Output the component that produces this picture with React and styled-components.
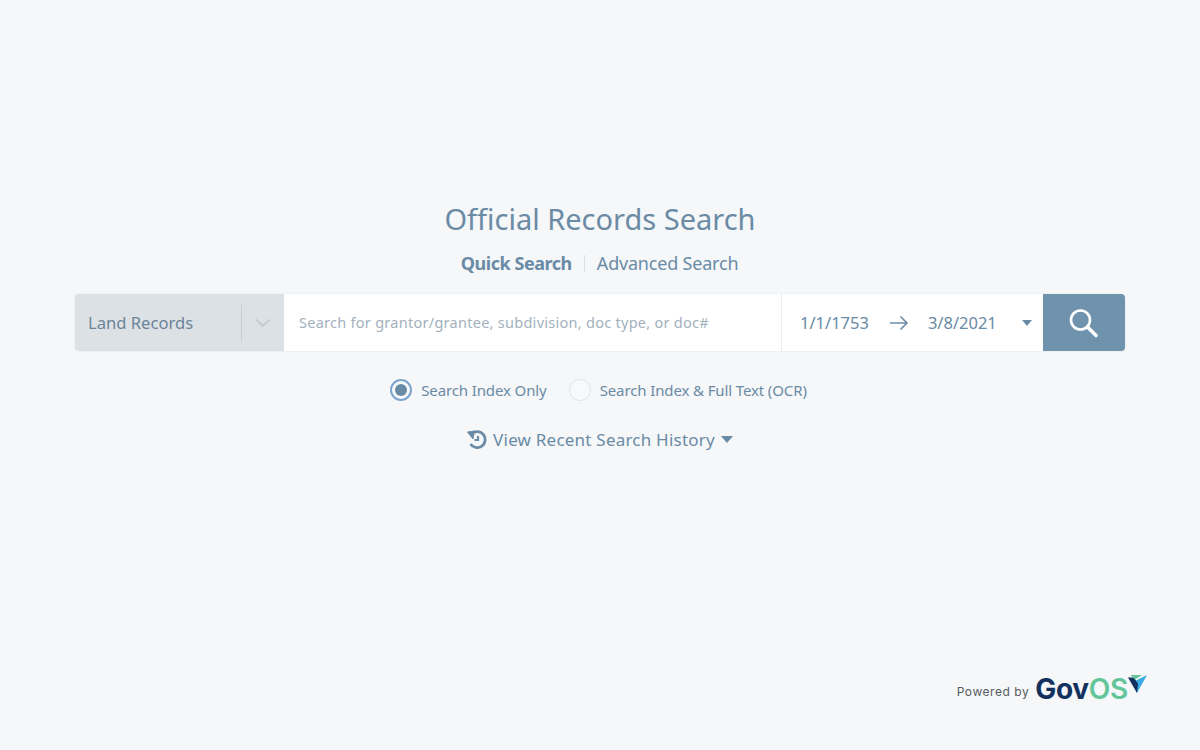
import React from 'react'
import styled, { createGlobalStyle } from 'styled-components'

const Global = createGlobalStyle`
    html, body {
        margin: 0;
        padding: 0;
        background: #f5f7f9;
    }
    * { box-sizing: border-box; }
`

const Page = styled.div`
    height: 750px;
    overflow: hidden;
    display: flex;
    flex-direction: column;
    align-items: center;
    padding-top: 199px;
    font-family: "Noto Sans", "Open Sans", sans-serif;
    color: #6a8ba6;
`

const Title = styled.h1`
    margin: 0;
    font-weight: 400;
    font-size: 29px;
    line-height: 40px;
    color: #6b8ba5;
`

const Tabs = styled.div`
    display: flex;
    align-items: center;
    margin-top: 11px;
    margin-right: 1px;
    height: 26px;
    font-size: 18px;
`

const Tab = styled.span`
    font-weight: ${(p) => (p.$active ? 700 : 400)};
    letter-spacing: ${(p) => (p.$active ? '-0.45px' : '-0.2px')};
`

const Divider = styled.span`
    width: 1px;
    height: 17px;
    margin: 0 12px;
    background: #dce1e6;
`

const Bar = styled.div`
    width: 1050px;
    height: 57px;
    margin-top: 18px;
    display: flex;
    border-radius: 4px;
    overflow: hidden;
    box-shadow: 0 0 2px rgba(120, 135, 150, 0.18);
`

const Select = styled.div`
    width: 209px;
    display: flex;
    align-items: center;
    background: #dce1e6;
    padding-left: 13px;
    font-size: 16.6px;
    color: #6d8498;
`

const SelectLabel = styled.span`
    width: 153px;
`

const SelectRule = styled.span`
    width: 1px;
    height: 36px;
    background: #c5cdd4;
`

const Chevron = styled.svg`
    margin-left: 13px;
    width: 16px;
    height: 10px;
    fill: none;
    stroke: #c4ccd3;
    stroke-width: 2;
`

const Input = styled.input`
    width: 497px;
    border: 0;
    outline: 0;
    padding: 0 15px 2px;
    background: #fff;
    font-family: inherit;
    font-size: 14.5px;
    letter-spacing: 0.27px;

    &::placeholder {
        color: #a3b1bd;
        opacity: 1;
    }
`

const Dates = styled.div`
    width: 262px;
    display: flex;
    align-items: center;
    background: #fff;
    border-left: 1px solid #e8ebef;
    padding-left: 18px;
    font-size: 16.5px;
    color: #6a8ba6;
`

const Arrow = styled.svg`
    width: 20px;
    height: 16px;
    margin: 0 19px 0 20px;
    fill: none;
    stroke: #6f8ca5;
    stroke-width: 1.6;
`

const Caret = styled.span`
    width: 0;
    height: 0;
    border-left: ${(p) => p.$size}px solid transparent;
    border-right: ${(p) => p.$size}px solid transparent;
    border-top: ${(p) => p.$size + 1}px solid #6a8ba6;
`

const DateCaret = styled(Caret)`
    margin-left: 25px;
`

const SearchButton = styled.button`
    width: 82px;
    border: 0;
    padding: 0 3px 0 0;
    display: flex;
    align-items: center;
    justify-content: center;
    background: #6f92ad;
`

const Options = styled.div`
    display: flex;
    align-items: center;
    margin-top: 27px;
    margin-right: 3px;
    height: 24px;
    font-size: 15px;
    letter-spacing: -0.12px;
`

const Option = styled.label`
    display: flex;
    align-items: center;
    gap: 9px;
    margin-left: ${(p) => (p.$spaced ? '22px' : 0)};
`

const Radio = styled.span`
    width: 22px;
    height: 22px;
    border-radius: 50%;
    display: flex;
    align-items: center;
    justify-content: center;
    background: #f8f9fb;
    border: ${(p) => (p.$checked ? '2px solid #7ba4cc' : '1.5px solid #e0e4e9')};

    &::after {
        content: "";
        display: ${(p) => (p.$checked ? 'block' : 'none')};
        width: 12px;
        height: 12px;
        border-radius: 50%;
        background: #6a8ba6;
    }
`

const History = styled.div`
    display: flex;
    align-items: center;
    margin-top: 25px;
    height: 24px;
    font-size: 17px;
    letter-spacing: 0.22px;
`

const HistoryIcon = styled.svg`
    width: 21px;
    height: 21px;
    margin-right: 5px;
    fill: none;
    stroke: #6a8ba6;
    stroke-width: 2.8;
`

const HistoryCaret = styled(Caret)`
    margin-left: 6px;
`

const Footer = styled.footer`
    margin-top: auto;
    align-self: flex-end;
    display: flex;
    align-items: flex-end;
    margin-right: 53px;
    margin-bottom: 48px;
`

const Powered = styled.span`
    font-size: 12px;
    color: #555b61;
    margin-right: 6px;
    margin-bottom: 3px;
    letter-spacing: 0.55px;
    font-family: "Inter", sans-serif;
`

const Logo = styled.span`
    font-family: "Inter", sans-serif;
    font-weight: 700;
    font-size: 28px;
    line-height: 26px;
    letter-spacing: -0.3px;
    color: #12315f;
`

const LogoGreen = styled.span`
    color: #62c69a;
    font-weight: 600;
`

const LogoMark = styled.svg`
    width: 20px;
    height: 18px;
    margin-left: -1px;
    margin-bottom: 9px;
`

const App = () => {
  return (
    <Page>
      <Global />
      <Title>Official Records Search</Title>
      <Tabs>
        <Tab $active>Quick Search</Tab>
        <Divider />
        <Tab>Advanced Search</Tab>
      </Tabs>
      <Bar>
        <Select>
          <SelectLabel>Land Records</SelectLabel>
          <SelectRule />
          <Chevron viewBox="0 0 16 10"><path d="M1 1.5 8 8l7-6.5" /></Chevron>
        </Select>
        <Input placeholder="Search for grantor/grantee, subdivision, doc type, or doc#" />
        <Dates>
          <span>1/1/1753</span>
          <Arrow viewBox="0 0 20 16"><path d="M1 8h17M11.5 1.5 18 8l-6.5 6.5" /></Arrow>
          <span>3/8/2021</span>
          <DateCaret $size={5} />
        </Dates>
        <SearchButton aria-label="Search">
          <svg width="32" height="32" viewBox="0 0 32 32" fill="none" stroke="#fff">
            <circle cx="13.5" cy="13" r="9.5" strokeWidth="2.6" />
            <path d="M20.5 20 29 28.5" strokeWidth="3.6" strokeLinecap="round" />
          </svg>
        </SearchButton>
      </Bar>
      <Options>
        <Option><Radio $checked />Search Index Only</Option>
        <Option $spaced><Radio />Search Index &amp; Full Text (OCR)</Option>
      </Options>
      <History>
        <HistoryIcon viewBox="0 0 21 21">
          <path d="M5 4.5A8 8 0 1 1 3.5 15" />
          <path d="M0.5 3 7.5 2 6 10Z" fill="#6a8ba6" strokeWidth="1" />
          <path d="M11 7v4H7.5" strokeWidth="2.2" />
        </HistoryIcon>
        View Recent Search History
        <HistoryCaret $size={6} />
      </History>
      <Footer>
        <Powered>Powered by</Powered>
        <Logo>Gov<LogoGreen>OS</LogoGreen></Logo>
        <LogoMark viewBox="0 0 20 18">
          <path d="M20 0 10 18 8 6z" fill="#3aa9e0" />
          <path d="M1 2.5 7 2.5 11 9 10 18z" fill="#12315f" />
          <path d="M3.5 0H15L8 4.5 6 2.5z" fill="#62c69a" />
        </LogoMark>
      </Footer>
    </Page>
  )
}

export default App
